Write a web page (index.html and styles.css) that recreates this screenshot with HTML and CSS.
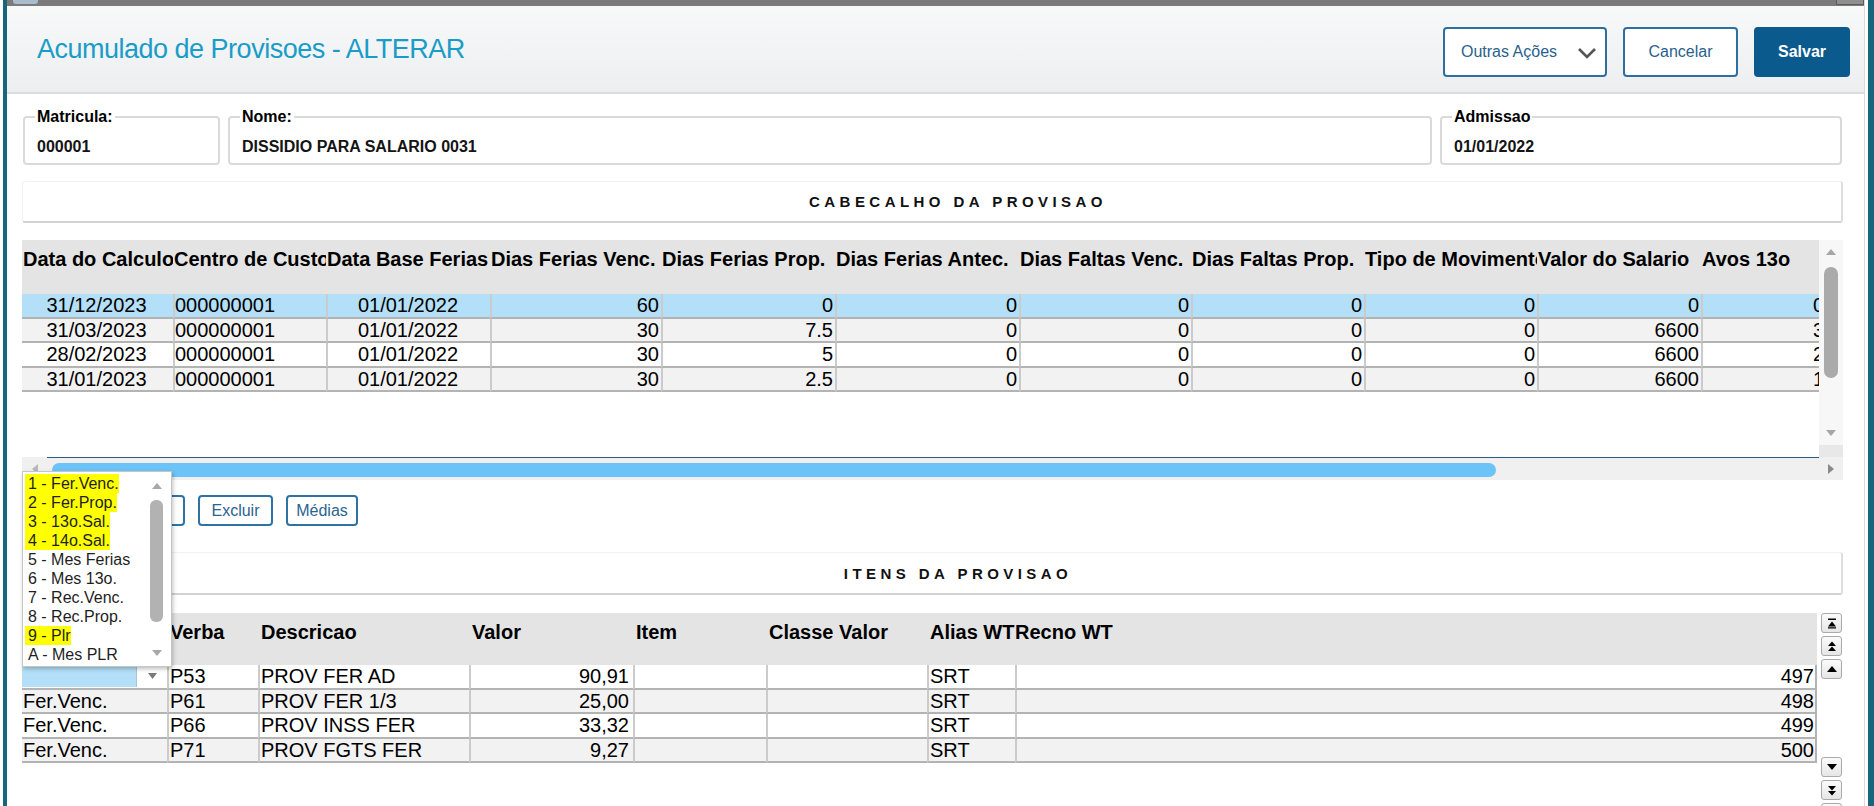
FILE: index.html
```html
<!DOCTYPE html>
<html lang="pt-BR">
<head>
    <meta charset="UTF-8">
    <meta name="viewport" content="width=device-width, initial-scale=1.0">
    <title>Acumulado de Provisoes - ALTERAR</title>
    <link rel="stylesheet" href="styles.css">
</head>
<body>
<div class="frame">
    <div class="edge edge-left"></div>

    <div class="main">
        <div class="topbar"><span class="tb-icon"></span><span class="tb-ctrl"></span></div>

        <header class="page-head">
            <h1>Acumulado de Provisoes - ALTERAR</h1>
            <div class="actions">
                <button class="btn btn-menu">Outras Ações
                    <svg class="chev" width="20" height="12" viewBox="0 0 20 12"><polyline points="2,2 10,10 18,2" fill="none" stroke="#555" stroke-width="2.6"/></svg>
                </button>
                <button class="btn btn-cancel">Cancelar</button>
                <button class="btn btn-primary">Salvar</button>
            </div>
        </header>

        <div class="fields">
            <fieldset class="field f-mat"><legend>Matricula:</legend><div class="field-value">000001</div></fieldset>
            <fieldset class="field f-nome"><legend>Nome:</legend><div class="field-value">DISSIDIO PARA SALARIO 0031</div></fieldset>
            <fieldset class="field f-adm"><legend>Admissao</legend><div class="field-value">01/01/2022</div></fieldset>
        </div>

        <div class="section-title">CABECALHO DA PROVISAO</div>

        <!-- grid do cabecalho -->
        <div class="grid grid-top">
            <div class="grid-body">
                <div class="grid-view">
                    <table>
                        <colgroup>
                            <col style="width:151px"><col style="width:153px"><col style="width:164px"><col style="width:171px">
                            <col style="width:174px"><col style="width:184px"><col style="width:172px"><col style="width:173px">
                            <col style="width:173px"><col style="width:164px"><col style="width:125px">
                        </colgroup>
                        <thead>
                            <tr>
                                <th>Data do Calculo</th><th>Centro de Custo</th><th>Data Base Ferias</th><th>Dias Ferias Venc.</th>
                                <th>Dias Ferias Prop.</th><th>Dias Ferias Antec.</th><th>Dias Faltas Venc.</th><th>Dias Faltas Prop.</th>
                                <th>Tipo de Movimento</th><th>Valor do Salario</th><th>Avos 13o</th>
                            </tr>
                        </thead>
                        <tbody>
                            <tr class="selected">
                                <td class="c">31/12/2023</td><td>000000001</td><td class="c">01/01/2022</td><td class="r">60</td>
                                <td class="r">0</td><td class="r">0</td><td class="r">0</td><td class="r">0</td><td class="r">0</td><td class="r">0</td><td class="r">0</td>
                            </tr>
                            <tr>
                                <td class="c">31/03/2023</td><td>000000001</td><td class="c">01/01/2022</td><td class="r">30</td>
                                <td class="r">7.5</td><td class="r">0</td><td class="r">0</td><td class="r">0</td><td class="r">0</td><td class="r">6600</td><td class="r">3</td>
                            </tr>
                            <tr>
                                <td class="c">28/02/2023</td><td>000000001</td><td class="c">01/01/2022</td><td class="r">30</td>
                                <td class="r">5</td><td class="r">0</td><td class="r">0</td><td class="r">0</td><td class="r">0</td><td class="r">6600</td><td class="r">2</td>
                            </tr>
                            <tr>
                                <td class="c">31/01/2023</td><td>000000001</td><td class="c">01/01/2022</td><td class="r">30</td>
                                <td class="r">2.5</td><td class="r">0</td><td class="r">0</td><td class="r">0</td><td class="r">0</td><td class="r">6600</td><td class="r">1</td>
                            </tr>
                        </tbody>
                    </table>
                </div>
                <div class="vscroll">
                    <span class="vs-arrow"><svg width="10" height="6" viewBox="0 0 10 6"><path d="M0 6L5 0L10 6Z" fill="#a6a6a6"/></svg></span>
                    <span class="vs-thumb"></span>
                    <span class="vs-space"></span>
                    <span class="vs-arrow"><svg width="10" height="6" viewBox="0 0 10 6"><path d="M0 0L5 6L10 0Z" fill="#a6a6a6"/></svg></span>
                    <span class="vs-corner"></span>
                </div>
            </div>
            <div class="hscroll">
                <span class="hs-arrow"><svg width="6" height="10" viewBox="0 0 6 10"><path d="M6 0L0 5L6 10Z" fill="#b8b8b8"/></svg></span>
                <div class="hs-track"><span class="hs-thumb"></span></div>
                <span class="hs-arrow"><svg width="6" height="10" viewBox="0 0 6 10"><path d="M0 0L6 5L0 10Z" fill="#8a8a8a"/></svg></span>
            </div>
        </div>

        <!-- os dois primeiros botoes ficam embaixo da lista aberta -->
        <div class="grid-actions">
            <button class="btn-small" title="Incluir"></button>
            <button class="btn-small" title="Alterar"></button>
            <button class="btn-small">Excluir</button>
            <button class="btn-small btn-medias">Médias</button>
        </div>

        <div class="section-title">ITENS DA PROVISAO</div>

        <!-- grid dos itens -->
        <div class="grid grid-items">
            <div class="grid-view">
                <table>
                    <colgroup>
                        <col style="width:145px"><col style="width:91px"><col style="width:211px"><col style="width:164px">
                        <col style="width:133px"><col style="width:161px"><col style="width:88px"><col style="width:802px">
                    </colgroup>
                    <thead>
                        <tr>
                            <th></th><th>Verba</th><th>Descricao</th><th>Valor</th><th>Item</th><th>Classe Valor</th><th>Alias WT</th><th class="th-last">Recno WT</th>
                        </tr>
                    </thead>
                    <tbody>
                        <tr>
                            <td class="combo-cell"><div class="combo"><span class="combo-input"></span><span class="combo-btn"><svg width="9" height="6" viewBox="0 0 9 6"><path d="M0 0L4.5 6L9 0Z" fill="#7a7a7a"/></svg></span></div></td>
                            <td>P53</td><td>PROV FER AD</td><td class="r">90,91</td><td></td><td></td><td>SRT</td><td class="r">497</td>
                        </tr>
                        <tr>
                            <td>Fer.Venc.</td><td>P61</td><td>PROV FER 1/3</td><td class="r">25,00</td><td></td><td></td><td>SRT</td><td class="r">498</td>
                        </tr>
                        <tr>
                            <td>Fer.Venc.</td><td>P66</td><td>PROV INSS FER</td><td class="r">33,32</td><td></td><td></td><td>SRT</td><td class="r">499</td>
                        </tr>
                        <tr>
                            <td>Fer.Venc.</td><td>P71</td><td>PROV FGTS FER</td><td class="r">9,27</td><td></td><td></td><td>SRT</td><td class="r">500</td>
                        </tr>
                    </tbody>
                </table>
            </div>
            <div class="nav-col">
                <span class="nav-btn"><svg width="10" height="11" viewBox="0 0 10 11"><path d="M1 0.5h8v1.6H1z M5 3.5L9 8.5H1z M1 9.2h8v1.3H1z"/></svg></span>
                <span class="nav-btn"><svg width="10" height="11" viewBox="0 0 10 11"><path d="M5 0.5L9 5H1z M5 5.5L9 10H1z"/></svg></span>
                <span class="nav-btn"><svg width="10" height="6" viewBox="0 0 10 6"><path d="M5 0L10 6H0z"/></svg></span>
                <span class="nav-space"></span>
                <span class="nav-btn"><svg width="10" height="6" viewBox="0 0 10 6"><path d="M0 0H10L5 6z"/></svg></span>
                <span class="nav-btn"><svg width="10" height="11" viewBox="0 0 10 11"><path d="M1 1H9L5 5.5z M1 6H9L5 10.5z"/></svg></span>
                <span class="nav-btn"><svg width="10" height="11" viewBox="0 0 10 11"><path d="M1 0.5h8v1.3H1z M1 2.5H9L5 7.5z M1 8.9h8v1.6H1z"/></svg></span>
            </div>
        </div>
    </div>

    <div class="edge edge-right"></div>

    <!-- lista aberta do combo da primeira linha -->
    <div class="dropdown">
        <ul class="dd-list">
            <li><span class="hl">1 - Fer.Venc.</span></li>
            <li><span class="hl">2 - Fer.Prop.</span></li>
            <li><span class="hl">3 - 13o.Sal.</span></li>
            <li><span class="hl">4 - 14o.Sal.</span></li>
            <li>5 - Mes Ferias</li>
            <li>6 - Mes 13o.</li>
            <li>7 - Rec.Venc.</li>
            <li>8 - Rec.Prop.</li>
            <li><span class="hl">9 - Plr</span></li>
            <li>A - Mes PLR</li>
        </ul>
        <div class="dd-scroll">
            <span class="dd-arrow"><svg width="10" height="6" viewBox="0 0 10 6"><path d="M0 6L5 0L10 6Z" fill="#a8a8a8"/></svg></span>
            <span class="dd-thumb"></span>
            <span class="dd-space"></span>
            <span class="dd-arrow"><svg width="10" height="6" viewBox="0 0 10 6"><path d="M0 0L5 6L10 0Z" fill="#a8a8a8"/></svg></span>
        </div>
    </div>
</div>
</body>
</html>
```

FILE: styles.css
```css
body {
    margin: 0;
    width: 1874px;
    height: 806px;
    overflow: hidden;
    background: #fff;
    font-family: "Liberation Sans", Arial, sans-serif;
    color: #000;
}
.frame {
    position: relative;
    display: flex;
    height: 806px;
}
.edge {
    background: #17677c;
}
.edge-left {
    width: 4px;
    margin-left: 3px;
}
.edge-right {
    width: 6px;
    margin-left: 3px;
}
.main {
    width: 1857px;
    border-right: 1px solid #dcdcdc;
    display: flex;
    flex-direction: column;
}

/* barra superior da janela */
.topbar {
    height: 6px;
    background: #7b7b7b;
    display: flex;
    justify-content: space-between;
    padding-left: 6px;
}
.tb-icon {
    width: 25px;
    height: 4px;
    background: #a9bccb;
    border-radius: 0 0 3px 3px;
}
.tb-ctrl {
    width: 26px;
    height: 4px;
    background: #8f8f8f;
    border: 1px solid #5c5c5c;
    border-top: 0;
}

/* cabecalho da pagina */
.page-head {
    height: 86px;
    border-bottom: 2px solid #dcdcdc;
    background: linear-gradient(#f8f9f9, #eceef0);
    display: flex;
    align-items: center;
    justify-content: space-between;
    padding: 0 14px 0 30px;
}
.page-head h1 {
    margin: 0;
    font-size: 27px;
    font-weight: normal;
    letter-spacing: -0.5px;
    color: #1a9cc8;
}
.actions {
    display: flex;
    gap: 16px;
    margin-top: 6px;
}
.btn {
    height: 50px;
    box-sizing: border-box;
    border: 2px solid #2f6fa0;
    border-radius: 4px;
    background: #fff;
    color: #2b5f8c;
    font-family: inherit;
    font-size: 16px;
    padding: 0;
}
.btn-menu {
    width: 164px;
    display: flex;
    align-items: center;
    justify-content: space-between;
    padding: 0 8px 0 16px;
}
.chev {
    margin-top: 2px;
}
.btn-cancel {
    width: 115px;
}
.btn-primary {
    width: 96px;
    background: #0b5a8e;
    border-color: #0b5a8e;
    color: #fff;
    font-weight: bold;
}

/* campos */
.fields {
    display: flex;
    gap: 8px;
    padding: 15px 22px 0 16px;
}
.field {
    margin: 0;
    min-width: 0;
    padding: 12px 12px 6px;
    border: 2px solid #dadada;
    border-radius: 4px;
}
.field legend {
    font-size: 16px;
    line-height: 16px;
    font-weight: bold;
    padding: 0 2px;
    margin-left: -2px;
}
.field-value {
    font-size: 16px;
    line-height: 20px;
    font-weight: bold;
    color: #141414;
}
.f-mat {
    width: 197px;
    box-sizing: border-box;
}
.f-nome {
    flex: 1;
}
.f-adm {
    width: 402px;
    box-sizing: border-box;
}

/* titulos de secao */
.section-title {
    height: 42px;
    box-sizing: border-box;
    margin: 16px 21px 0 15px;
    border: 1px solid #f2f2f2;
    border-right: 2px solid #dedede;
    border-bottom: 2px solid #d2d2d2;
    border-radius: 3px;
    display: flex;
    align-items: center;
    justify-content: center;
    padding-left: 52px;
    font-size: 15px;
    font-weight: bold;
    letter-spacing: 4.45px;
    color: #111;
}

/* grids */
.grid {
    margin: 17px 21px 0 15px;
}
.grid-body {
    display: flex;
    height: 217px;
}
.grid-view {
    flex: 1;
    overflow: hidden;
}
.grid-view table {
    border-collapse: separate;
    border-spacing: 0;
    table-layout: fixed;
    font-size: 20px;
}
.grid-top table {
    width: 1804px;
}
.grid-view th {
    height: 54px;
    box-sizing: border-box;
    background: #e4e4e4;
    padding: 8px 0 0 1px;
    line-height: 22px;
    text-align: left;
    vertical-align: top;
    white-space: nowrap;
    overflow: hidden;
}
.grid-view td {
    height: 24.5px;
    box-sizing: border-box;
    padding: 0 2px 0 0;
    line-height: 22px;
    border-bottom: 2px solid #b3b3b3;
    white-space: nowrap;
    overflow: hidden;
}
.grid-view td + td {
    border-left: 2px solid #cbcbcb;
}
.grid-view tbody tr:nth-child(even) td {
    background: #f2f2f2;
}
.grid-view tr.selected td {
    background: #b3e0f8;
}
.c {
    text-align: center;
}
.r {
    text-align: right;
}

.vscroll {
    width: 24px;
    background: #f7f7f7;
    display: flex;
    flex-direction: column;
    align-items: center;
}
.vs-arrow {
    height: 24px;
    display: flex;
    align-items: center;
}
.vs-thumb {
    width: 14px;
    height: 111px;
    margin-top: 3px;
    border-radius: 7px;
    background: #aaaaaa;
}
.vs-space {
    flex: 1;
}
.vs-corner {
    width: 24px;
    height: 12px;
    background: #e8e8e8;
}
.hscroll {
    display: flex;
    height: 23px;
    background: #f0f0f0;
}
.hs-arrow {
    width: 25px;
    display: flex;
    align-items: center;
    justify-content: center;
}
.hs-arrow:last-child {
    width: 24px;
}
.hs-track {
    flex: 1;
    border-top: 1px solid #285c86;
    padding: 5px 0 0 5px;
}
.hs-thumb {
    display: block;
    width: 1444px;
    height: 14px;
    border-radius: 7px;
    background: #6cc3f7;
}

/* botoes do grid */
.grid-actions {
    display: flex;
    gap: 13px;
    margin: 15px 0 0 15px;
}
.btn-small {
    width: 75px;
    height: 31px;
    box-sizing: border-box;
    border: 2px solid #2f73a3;
    border-radius: 4px;
    background: #fff;
    color: #2b6390;
    font-family: inherit;
    font-size: 16px;
    padding: 0;
}
.btn-medias {
    width: 72px;
}
.grid-actions + .section-title {
    margin-top: 26px;
    height: 43px;
}

.grid-items {
    margin-top: 18px;
    display: flex;
    height: 193px;
}
.grid-items table {
    width: 1795px;
}
.grid-items th {
    height: 52px;
    padding-left: 3px;
}
.grid-items th.th-last {
    padding-left: 0;
}
.grid-items td {
    padding: 0 4px 0 1px;
}
.grid-items td:last-child {
    border-right: 2px solid #b3b3b3;
    padding-right: 1px;
}
.grid-items td.combo-cell {
    padding: 0;
    background: #fff;
}
.combo {
    display: flex;
    height: 22px;
}
.combo-input {
    width: 114px;
    background: #b3e0f8;
    border-right: 1px solid #a9c4d4;
}
.combo-btn {
    flex: 1;
    display: flex;
    align-items: center;
    justify-content: center;
}
.nav-col {
    width: 21px;
    margin: 0 1px 0 2px;
    display: flex;
    flex-direction: column;
    gap: 3px;
}
.nav-btn {
    height: 20px;
    box-sizing: border-box;
    border: 1px solid #a9a9a9;
    border-radius: 3px;
    background: linear-gradient(#fbfbfb, #e6e6e6);
    display: flex;
    align-items: center;
    justify-content: center;
    flex-shrink: 0;
}
.nav-space {
    height: 72px;
    flex-shrink: 0;
}

/* lista do combo */
.dropdown {
    position: absolute;
    left: 22px;
    top: 471px;
    width: 150px;
    height: 196px;
    box-sizing: border-box;
    border: 1px solid #c6c6c6;
    background: #fff;
    box-shadow: 1px 2px 4px rgba(0, 0, 0, 0.25);
    display: flex;
}
.dd-list {
    list-style: none;
    margin: 0;
    padding: 2px 0 0 5px;
    width: 120px;
    font-size: 16px;
    line-height: 19px;
    color: #1e1e1e;
}
.dd-list li {
    white-space: nowrap;
}
.hl {
    display: inline-block;
    background: #ffff00;
    margin-left: -3px;
    padding-left: 3px;
}
.dd-scroll {
    width: 17px;
    display: flex;
    flex-direction: column;
    align-items: center;
    padding: 8px 0 7px;
}
.dd-arrow {
    height: 12px;
    display: flex;
    align-items: center;
}
.dd-thumb {
    width: 13px;
    height: 122px;
    margin-top: 8px;
    border-radius: 6px;
    background: #b2b2b2;
}
.dd-space {
    flex: 1;
}
```
